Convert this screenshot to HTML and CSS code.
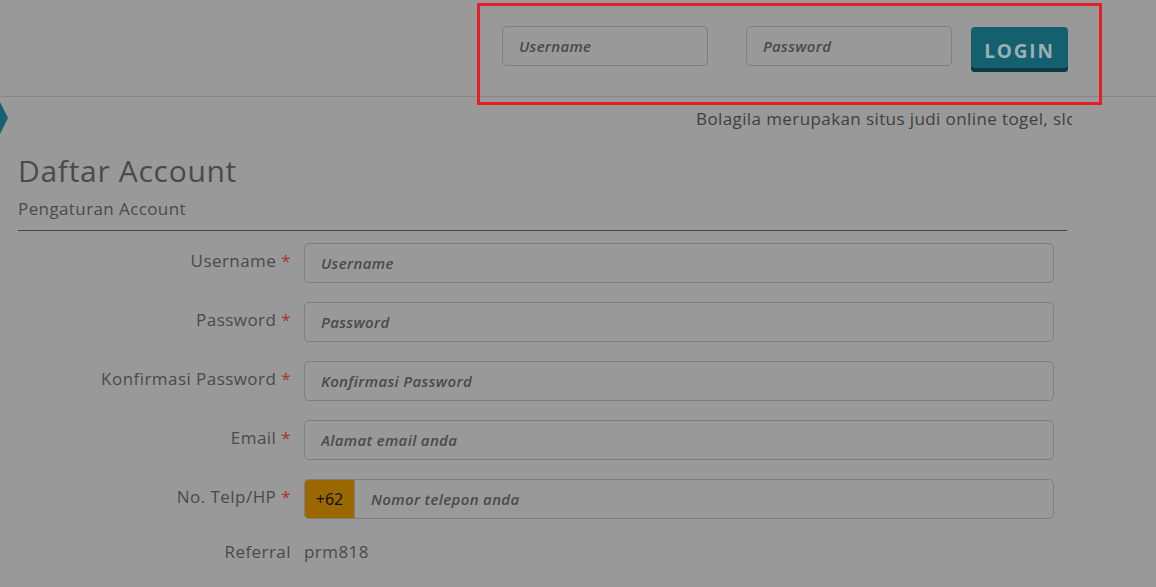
FILE: index.html
```html
<!DOCTYPE html>
<html lang="id">
<head>
<meta charset="utf-8">
<title>Daftar Account</title>
<link rel="stylesheet" href="styles.css">
</head>
<body>
<header class="topbar">
  <form class="login">
    <input class="login-input" type="text" placeholder="Username">
    <input class="login-input pw" type="password" placeholder="Password">
    <button class="login-btn" type="button">LOGIN</button>
  </form>
  <div class="highlight"></div>
</header>
<div class="ticker-row">
  <span class="ticker-arrow"></span>
  <div class="ticker"><span>Bolagila merupakan situs judi online togel, slot, casino dan sportsbook terpercaya</span></div>
</div>
<main class="content">
  <h1 class="title">Daftar Account</h1>
  <div class="subtitle">Pengaturan Account</div>
  <form class="reg">
    <div class="row"><label class="lbl">Username <span class="req">*</span></label><input class="field" placeholder="Username"></div>
    <div class="row"><label class="lbl">Password <span class="req">*</span></label><input class="field" placeholder="Password"></div>
    <div class="row"><label class="lbl">Konfirmasi Password <span class="req">*</span></label><input class="field" placeholder="Konfirmasi Password"></div>
    <div class="row"><label class="lbl">Email <span class="req">*</span></label><input class="field" placeholder="Alamat email anda"></div>
    <div class="row"><label class="lbl">No. Telp/HP <span class="req">*</span></label>
      <div class="group"><span class="addon">+62</span><input class="field in-group" placeholder="Nomor telepon anda"></div></div>
    <div class="row ref"><label class="lbl">Referral</label><span class="refval">prm818</span></div>
  </form>
</main>
</body>
</html>
```
FILE: styles.css
```css
* { box-sizing: border-box; }
html, body { margin: 0; padding: 0; }
body {
  background: #999999;
  font-family: "Open Sans", "Noto Sans", sans-serif;
  color: #4a4a4a;
  width: 1156px;
  height: 587px;
  overflow: hidden;
}
.topbar {
  position: relative;
  height: 97px;
  border-bottom: 1px solid #878787;
}
.login {
  display: flex;
  justify-content: flex-end;
  align-items: flex-start;
  padding: 26px 88px 0 0;
}
.login-input {
  width: 206px;
  height: 40px;
  border: 1px solid #7e7e7e;
  border-radius: 5px;
  background: #999999;
  padding: 0 16px;
  font-family: inherit;
  font-size: 15px;
  font-style: italic;
  font-weight: 600;
  letter-spacing: 0.3px;
  color: #4a4a4a;
  outline: none;
}
.login-input::placeholder { color: #4a4a4a; }
.login-input.pw { margin-left: 38px; }
.login-btn {
  margin-left: 19px;
  margin-top: 1px;
  width: 97px;
  height: 45px;
  background: #15606e;
  border: none;
  border-radius: 4px;
  box-shadow: inset 0 -4px 0 #0c3a44;
  color: #9ab1b6;
  font-family: inherit;
  font-weight: 700;
  font-size: 19px;
  letter-spacing: 1.8px;
  padding: 2px 0 0 0;
}
.highlight {
  position: absolute;
  left: 477px;
  top: 3px;
  width: 625px;
  height: 102px;
  border: 3px solid #e31e24;
}
.ticker-row {
  position: relative;
  height: 46px;
}
.ticker-arrow {
  position: absolute;
  left: -12px;
  top: 3px;
  width: 20px;
  height: 36px;
  background: #16606f;
  clip-path: polygon(0 0, 55% 0, 100% 50%, 55% 100%, 0 100%);
}
.ticker {
  margin-left: 696px;
  width: 376px;
  overflow: hidden;
  white-space: nowrap;
  padding-top: 10px;
  font-size: 17px;
  letter-spacing: 0.4px;
  color: #3f3f3f;
}
.content {
  margin-left: 17px;
  width: 1050px;
}
.title {
  margin: 10px 0 0 1px;
  font-weight: 400;
  font-size: 30px;
  line-height: 36px;
  letter-spacing: 0.7px;
  color: #4a4a4a;
}
.subtitle {
  margin: 9px 0 0 1px;
  font-size: 17px;
  line-height: 22px;
  letter-spacing: 0.4px;
  color: #4a4a4a;
  padding-bottom: 10px;
  border-bottom: 1px solid #474747;
}
.reg {
  display: flex;
  flex-direction: column;
  gap: 19px;
  padding-top: 12px;
}
.row {
  display: flex;
  align-items: flex-start;
  height: 40px;
}
.lbl {
  width: 287px;
  padding-right: 13px;
  text-align: right;
  font-size: 17px;
  line-height: 22px;
  letter-spacing: 0.45px;
  padding-top: 7px;
  color: #4a4a4a;
  white-space: nowrap;
}
.req { color: #a83232; }
.field {
  width: 750px;
  height: 40px;
  border: 1px solid #7e7e7e;
  border-radius: 5px;
  background: #999999;
  padding: 0 16px;
  font-family: inherit;
  font-size: 15px;
  font-style: italic;
  font-weight: 600;
  letter-spacing: 0.35px;
  outline: none;
}
.field::placeholder { color: #4a4a4a; }
.group {
  display: flex;
  width: 750px;
  height: 40px;
}
.addon {
  width: 50px;
  height: 40px;
  background: #9b6700;
  border: 1px solid #7e7e7e;
  border-right: none;
  border-radius: 5px 0 0 5px;
  color: #111;
  font-family: "Noto Sans", sans-serif;
  font-size: 16px;
  line-height: 38px;
  text-align: center;
}
.field.in-group {
  width: 700px;
  border-radius: 0 5px 5px 0;
}
.ref { height: auto; padding-top: 3px; }
.ref .lbl { padding-top: 0; padding-right: 13px; }
.refval { font-size: 17px; line-height: 22px; letter-spacing: 0.45px; color: #4a4a4a; }
```
